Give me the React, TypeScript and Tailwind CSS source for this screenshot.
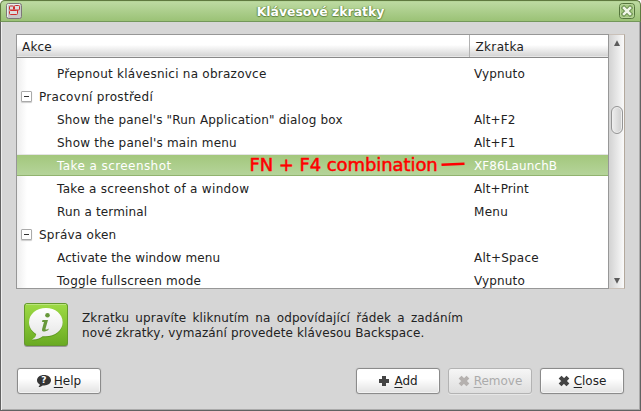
import type { ReactNode } from "react";

type Row = { label: string; spacing: string; key?: string; keySpacing?: string; group?: boolean; selected?: boolean };

const rows: Row[] = [
  { label: "Přepnout klávesnici na obrazovce", spacing: "tracking-[0.25px]", key: "Vypnuto", keySpacing: "tracking-[0.15px]" },
  { label: "Pracovní prostředí", spacing: "tracking-[0.3px]", group: true },
  { label: "Show the panel's \"Run Application\" dialog box", spacing: "tracking-[0.19px]", key: "Alt+F2", keySpacing: "tracking-[0.1px]" },
  { label: "Show the panel's main menu", spacing: "tracking-[0.21px]", key: "Alt+F1", keySpacing: "tracking-[0.1px]" },
  { label: "Take a screenshot", spacing: "tracking-[0.42px]", key: "XF86LaunchB", keySpacing: "tracking-[0.1px]", selected: true },
  { label: "Take a screenshot of a window", spacing: "tracking-[0.31px]", key: "Alt+Print", keySpacing: "tracking-[0.1px]" },
  { label: "Run a terminal", spacing: "tracking-[0.15px]", key: "Menu", keySpacing: "tracking-[0.3px]" },
  { label: "Správa oken", spacing: "tracking-[0.25px]", group: true },
  { label: "Activate the window menu", spacing: "tracking-[0.13px]", key: "Alt+Space", keySpacing: "tracking-[0.22px]" },
  { label: "Toggle fullscreen mode", spacing: "tracking-[0.25px]", key: "Vypnuto", keySpacing: "tracking-[0.15px]" },
];

function TitleBar() {
  return (
    <div className="relative flex h-[22px] shrink-0 items-center justify-between rounded-t-[5px] border border-[#5f793f] border-b-[#73975a] bg-linear-to-b from-[#bedba3] to-[#9bc276] pr-[5px] pl-[5px] shadow-[inset_0_1px_0_#b5d598]">
      <svg width="16" height="16" viewBox="0 0 16 16">
        <rect x=".5" y=".5" width="15" height="15" rx="2" fill="#c9c9c9" stroke="#7c7777" />
        <path d="M1.5 14V2Q1.5 1.5 2 1.5H14" fill="none" stroke="#eee" />
        <g fill="#ddd" stroke="#cf2d2d">
          <rect x="3.5" y="3" width="4" height="4" rx="1" />
          <rect x="8.5" y="2.5" width="5" height="4.5" rx="1" />
          <rect x="3.5" y="7.5" width="8" height="4" rx="1" />
          <path d="M11.5 7V9.5" />
        </g>
      </svg>
      <span className="pt-px text-[12.4px] leading-5 font-bold whitespace-nowrap text-white [text-shadow:0_1px_1px_#60843f,1px_0_1px_#759a54,-1px_0_1px_#759a54]">Klávesové zkratky</span>
      <svg width="16" height="16" viewBox="0 0 16 16">
        <rect x=".5" y=".5" width="15" height="15" rx="3" fill="#a3c77f" stroke="#55753c" />
        <rect x="1.5" y="1.5" width="13" height="13" rx="2" fill="none" stroke="#b9d59c" />
        <path d="M5 5l6 6m0-6l-6 6" stroke="#64884a" strokeWidth="4.4" strokeLinecap="square" />
        <path d="M5 5l6 6m0-6l-6 6" stroke="#f0f6e8" strokeWidth="2.6" strokeLinecap="square" />
      </svg>
    </div>
  );
}

function ListRow({ row }: { row: Row }) {
  if (row.group) {
    return (
      <div className="flex h-[23px] items-center pl-1">
        <span className="mt-[-1px] flex size-[11px] items-center justify-center rounded-[1px] border border-[#aaa] bg-white shadow-[0_1px_1px_#ccc]">
          <span className="h-px w-[5px] bg-[#333]" />
        </span>
        <span className={`ml-[7px] pt-[2px] ${row.spacing}`}>{row.label}</span>
      </div>
    );
  }
  return (
    <div className={row.selected ? "relative flex h-[23px] items-center border-t border-[#e4e4e4] text-white" : "flex h-[23px] items-center pt-[2px]"}>
      {row.selected && <div className="absolute inset-x-0 top-0 h-[21px] border-b border-[#91b36f] bg-linear-to-b from-[#a3c77c] to-[#b5d49a]" />}
      <span className={`relative w-[457px] shrink-0 pl-10 ${row.spacing}`}>{row.label}</span>
      <span className={`relative ${row.keySpacing}`}>{row.key}</span>
      {row.selected && (
        <div className="absolute top-[-2px] left-[232.5px] text-[18px] leading-[23px] tracking-[-0.08px] text-[#f00] [-webkit-text-stroke:0.5px_#f00]">
          <span className="whitespace-nowrap">FN + F4 combination</span>
          <svg className="absolute top-[7px] left-[191px]" width="24" height="8" viewBox="0 0 24 8">
            <path d="M0.5 4.8L23.5 3.8" stroke="#f00" strokeWidth="2.6" />
          </svg>
        </div>
      )}
    </div>
  );
}

function ScrollBar() {
  return (
    <div className="flex w-4 flex-col items-center border-y border-r border-y-[#c9c0b8] border-r-[#b3a99d] bg-linear-to-r from-[#d2d2d2] to-[#fafafa]">
      <svg className="mt-[5px]" width="8" height="6" viewBox="0 0 8 6"><path d="M4 .2L7 6H1z" fill="#5c5c5c" /></svg>
      <div className="mt-[60px] h-7 w-3 rounded-full border border-[#949494] bg-linear-to-r from-[#eee] to-[#cecece] shadow-[inset_0_0_0_1px_#eee]" />
      <svg className="mt-auto mb-[4px]" width="8" height="6" viewBox="0 0 8 6"><path d="M1 0H7L4 5.8z" fill="#5c5c5c" /></svg>
    </div>
  );
}

function InfoIcon() {
  return (
    <svg className="shrink-0" width="46" height="46" viewBox="0 0 46 46">
      <defs>
        <linearGradient id="green" x2="0" y2="1"><stop stopColor="#9edb45" /><stop offset="1" stopColor="#69aa22" /></linearGradient>
        <linearGradient id="bubble" x2="0" y2="1"><stop stopColor="#fff" /><stop offset="1" stopColor="#e5e5e5" /></linearGradient>
      </defs>
      <rect x="1" y="2" width="44" height="43" rx="3" fill="#777" opacity=".65" />
      <rect x="1.5" y="1.5" width="43" height="42" rx="2.5" fill="url(#green)" stroke="#65992d" />
      <path d="M3 2.5H43" stroke="#bae47b" />
      <path d="M23 6C13.5 6 6 12 6 20.3c0 5.2 3 9.2 7.2 11.8-.2 2.5-1.5 4.1-4.2 5.3 5.2.2 8.4-1.2 10.6-3.2 11 1.3 20.1-5 20.1-13.9C39.7 12 32.3 6 23 6z" fill="#487e15" opacity=".5" transform="translate(0 1)" />
      <path d="M23 6C13.5 6 6 12 6 20.3c0 5.2 3 9.2 7.2 11.8-.2 2.5-1.5 4.1-4.2 5.3 5.2.2 8.4-1.2 10.6-3.2 11 1.3 20.1-5 20.1-13.9C39.7 12 32.3 6 23 6z" fill="url(#bubble)" />
      <circle cx="24.5" cy="13.3" r="2.3" fill="#67983a" />
      <path d="M19.5 18H25l-2.5 8.7q-.3 1.3 1.5.7l1.8-1-.5 1.7c-3.5 2.2-7 2.1-6.2-1.2l1.9-6.8h-2z" fill="#67983a" />
    </svg>
  );
}

function Cross({ color }: { color: string }) {
  return <svg width="12" height="12" viewBox="0 0 12 12"><path d="M3.5 3.5L8.5 8.5M8.5 3.5L3.5 8.5" stroke={color} strokeWidth="4" strokeLinecap="square" /></svg>;
}

function DialogButton({ icon, mnemonic, rest, disabled, gap }: { icon: ReactNode; mnemonic: string; rest: string; disabled?: boolean; gap: string }) {
  return (
    <button
      disabled={disabled}
      className={`flex h-[26px] w-[84px] items-center justify-center rounded-[3px] border whitespace-nowrap ${gap} ${disabled ? "border-[#b3b3b3] bg-linear-to-b from-[#f6f6f6] to-[#dedede] text-[#ababab] shadow-[0_1px_0_#e6e6e6]" : "border-[#8b8b8b] bg-linear-to-b from-white from-40% to-[#e2e2e2] text-[#222] shadow-[0_0_1px_#999,inset_0_0_0_1px_#fff8]"}`}
    >
      {icon}
      <span className="pt-px"><span className="underline decoration-1 underline-offset-2">{mnemonic}</span>{rest}</span>
    </button>
  );
}

export default function App() {
  return (
    <div className="h-[411px] w-[641px] overflow-hidden bg-white font-['DejaVu_Sans',sans-serif] text-[12px] leading-[15px] text-[#222]">
      <div className="flex h-full flex-col rounded-t-[5px] bg-[#d6d6d6]">
        <TitleBar />
        <main className="flex flex-1 flex-col border-x border-b border-[#626262] px-[15px] pt-3 shadow-[inset_1px_0_0_#eee,inset_-1px_-1px_0_#aaa]">
          <div className="flex h-[255px] w-[609px]">
            <div className="flex w-[593px] flex-col overflow-hidden border border-[#979797] bg-white">
              <div className="flex h-[23px] shrink-0 items-center border-b border-[#888] bg-linear-to-b from-white from-45% to-[#d1d1d1] shadow-[inset_0_-1px_0_#e7e7e7]">
                <span className="flex h-full w-[453px] items-center border-r border-[#b2b2b2] pt-[2px] pl-[5px] tracking-[0.2px]">Akce</span>
                <span className="pt-[2px] pl-[5.5px] tracking-[0.35px]">Zkratka</span>
              </div>
              <div className="flex-1 overflow-hidden bg-linear-to-r from-[#eee] to-white to-[10px] pt-[4px] whitespace-nowrap">
                {rows.map((row) => <ListRow key={row.label} row={row} />)}
              </div>
            </div>
            <ScrollBar />
          </div>
          <div className="mt-[13px] flex h-[46px] pl-[7px]">
            <InfoIcon />
            <p className="mt-[9px] ml-[13px] w-[381px] whitespace-nowrap">
              <span className="block tracking-[0.12px] [text-align-last:justify]">Zkratku upravíte kliknutím na odpovídající řádek a zadáním</span>
              <span className="block tracking-[0.11px]">nové zkratky, vymazání provedete klávesou Backspace.</span>
            </p>
          </div>
          <div className="mt-5 flex w-[608px] items-center pl-px">
            <DialogButton gap="gap-[3px]" mnemonic="H" rest="elp" icon={
              <span className="relative flex">
                <svg width="14" height="14" viewBox="0 0 14 14"><path d="M7 1C3 1 0 3.2 0 6.3c0 2 1.2 3.5 3 4.4L1.5 13c2 0 3.3-.8 4.2-1.6C10.3 12 14 9.7 14 6.3 14 3.2 11 1 7 1z" fill="#353535" /></svg>
                <span className="absolute inset-x-0 top-0 text-center text-[9px] leading-[13px] font-bold text-white">?</span>
              </span>
            } />
            <div className="ml-auto flex gap-[8px]">
              <DialogButton gap="gap-[4px]" mnemonic="A" rest="dd" icon={<svg width="12" height="12" viewBox="0 0 12 12"><path d="M6 1V11M1 6H11" stroke="#444" strokeWidth="4" /></svg>} />
              <DialogButton gap="gap-[4px]" mnemonic="R" rest="emove" disabled icon={<Cross color="#b5b1af" />} />
              <DialogButton gap="gap-[4px]" mnemonic="C" rest="lose" icon={<Cross color="#444" />} />
            </div>
          </div>
        </main>
      </div>
    </div>
  );
}
